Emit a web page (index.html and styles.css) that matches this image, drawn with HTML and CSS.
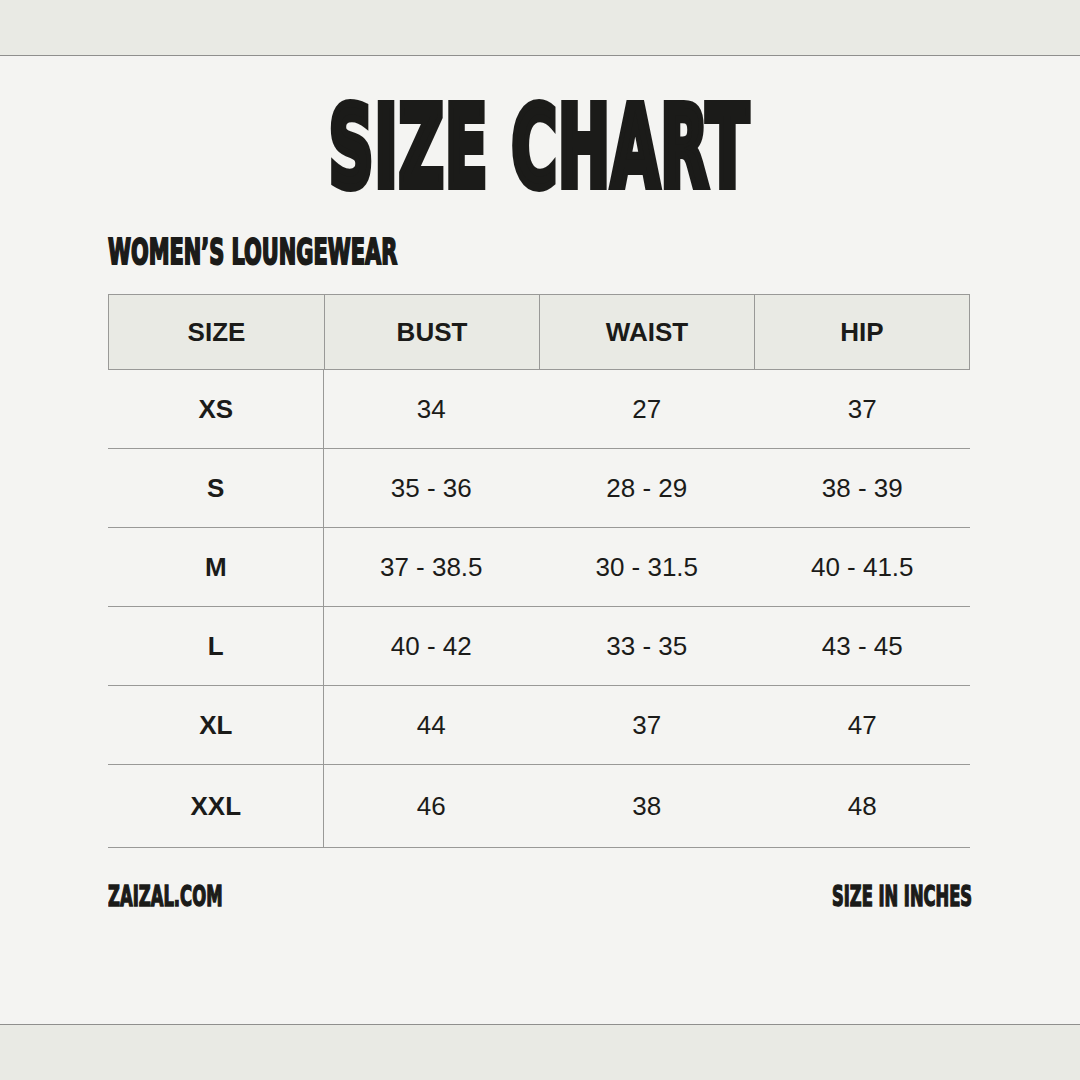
FILE: index.html
```html
<!DOCTYPE html>
<html>
	<head>
		<meta charset="utf-8">
		<title>Size Chart</title>
		<link rel="stylesheet" href="styles.css">
	</head>
	<body>

		<!-- top strip -->
		<div class="band band-top"></div>

		<div class="sheet">
			<div class="title-wrap">
				<h1 class="display title">SIZE CHART</h1>
			</div>

			<h2 class="display subtitle">WOMEN’S LOUNGEWEAR</h2>

			<!-- chart -->
			<div class="chart">
				<div class="thead">
					<div class="cell">SIZE</div>
					<div class="cell">BUST</div>
					<div class="cell">WAIST</div>
					<div class="cell">HIP</div>
				</div>
				<div class="row">
					<div class="cell size">XS</div>
					<div class="cell">34</div>
					<div class="cell">27</div>
					<div class="cell">37</div>
				</div>
				<div class="row">
					<div class="cell size">S</div>
					<div class="cell">35 - 36</div>
					<div class="cell">28 - 29</div>
					<div class="cell">38 - 39</div>
				</div>
				<div class="row">
					<div class="cell size">M</div>
					<div class="cell">37 - 38.5</div>
					<div class="cell">30 - 31.5</div>
					<div class="cell">40 - 41.5</div>
				</div>
				<div class="row">
					<div class="cell size">L</div>
					<div class="cell">40 - 42</div>
					<div class="cell">33 - 35</div>
					<div class="cell">43 - 45</div>
				</div>
				<div class="row">
					<div class="cell size">XL</div>
					<div class="cell">44</div>
					<div class="cell">37</div>
					<div class="cell">47</div>
				</div>
				<div class="row last">
					<div class="cell size">XXL</div>
					<div class="cell">46</div>
					<div class="cell">38</div>
					<div class="cell">48</div>
				</div>
			</div>

			<div class="foot">
				<span class="display foot-left">ZAIZAL.COM</span>
				<span class="display foot-right">SIZE IN INCHES</span>
			</div>
		</div>

		<!-- bottom strip -->
		<div class="band band-bottom"></div>

	</body>
</html>
```

FILE: styles.css
```css
* {
	margin: 0;
	padding: 0;
	box-sizing: border-box;
}
body {
	width: 1080px;
	height: 1080px;
	overflow: hidden;
	background-color: #e8e9e3;
	color: #1b1b19;
	font-family: "Liberation Sans", Arial, sans-serif;
}
.band {
	background-color: #e9eae4;
}
.band-top {
	height: 56px;
	border-bottom: 1px solid #8f8f8d;
}
.band-bottom {
	height: 56px;
	border-top: 1px solid #8f8f8d;
}
.sheet {
	height: 968px;
	background-color: #f4f4f2;
	padding: 35px 110px 0 108px;
}

/* condensed heavy lettering */
.display {
	display: inline-block;
	font-family: "DejaVu Sans", sans-serif;
	font-stretch: condensed;
	font-weight: bold;
	line-height: 1;
	white-space: nowrap;
	-webkit-text-stroke: 0.07em #1b1b19;
}
.title-wrap {
	text-align: center;
	height: 113px;
}
.title {
	font-size: 113px;
	letter-spacing: 2px;
	transform: scaleX(0.61);
	transform-origin: center;
}
.subtitle {
	display: block;
	margin-top: 30px;
	font-size: 36px;
	-webkit-text-stroke-width: 0.055em;
	transform: scaleX(0.645);
	transform-origin: left center;
}

.chart {
	margin-top: 24px;
	width: 862px;
	font-size: 26px;
}
.thead,
.row {
	display: grid;
	grid-template-columns: repeat(4, 1fr);
}
.thead {
	height: 76px;
	border: 1px solid #999997;
	background-color: #e9eae4;
	font-weight: bold;
}
.thead .cell + .cell {
	border-left: 1px solid #999997;
}
.row {
	height: 79px;
	border-bottom: 1px solid #999997;
}
.row.last {
	height: 83px;
}
.cell {
	display: flex;
	align-items: center;
	justify-content: center;
}
.row .size {
	font-weight: bold;
	border-right: 1px solid #999997;
	margin-left: 1px;
}

.foot {
	margin-top: 34px;
	width: 864px;
	display: flex;
	justify-content: space-between;
}
.foot-left,
.foot-right {
	font-size: 29px;
	-webkit-text-stroke-width: 0.05em;
}
.foot-left {
	transform: scaleX(0.63);
	transform-origin: left center;
}
.foot-right {
	transform: scaleX(0.625);
	transform-origin: right center;
}
```
